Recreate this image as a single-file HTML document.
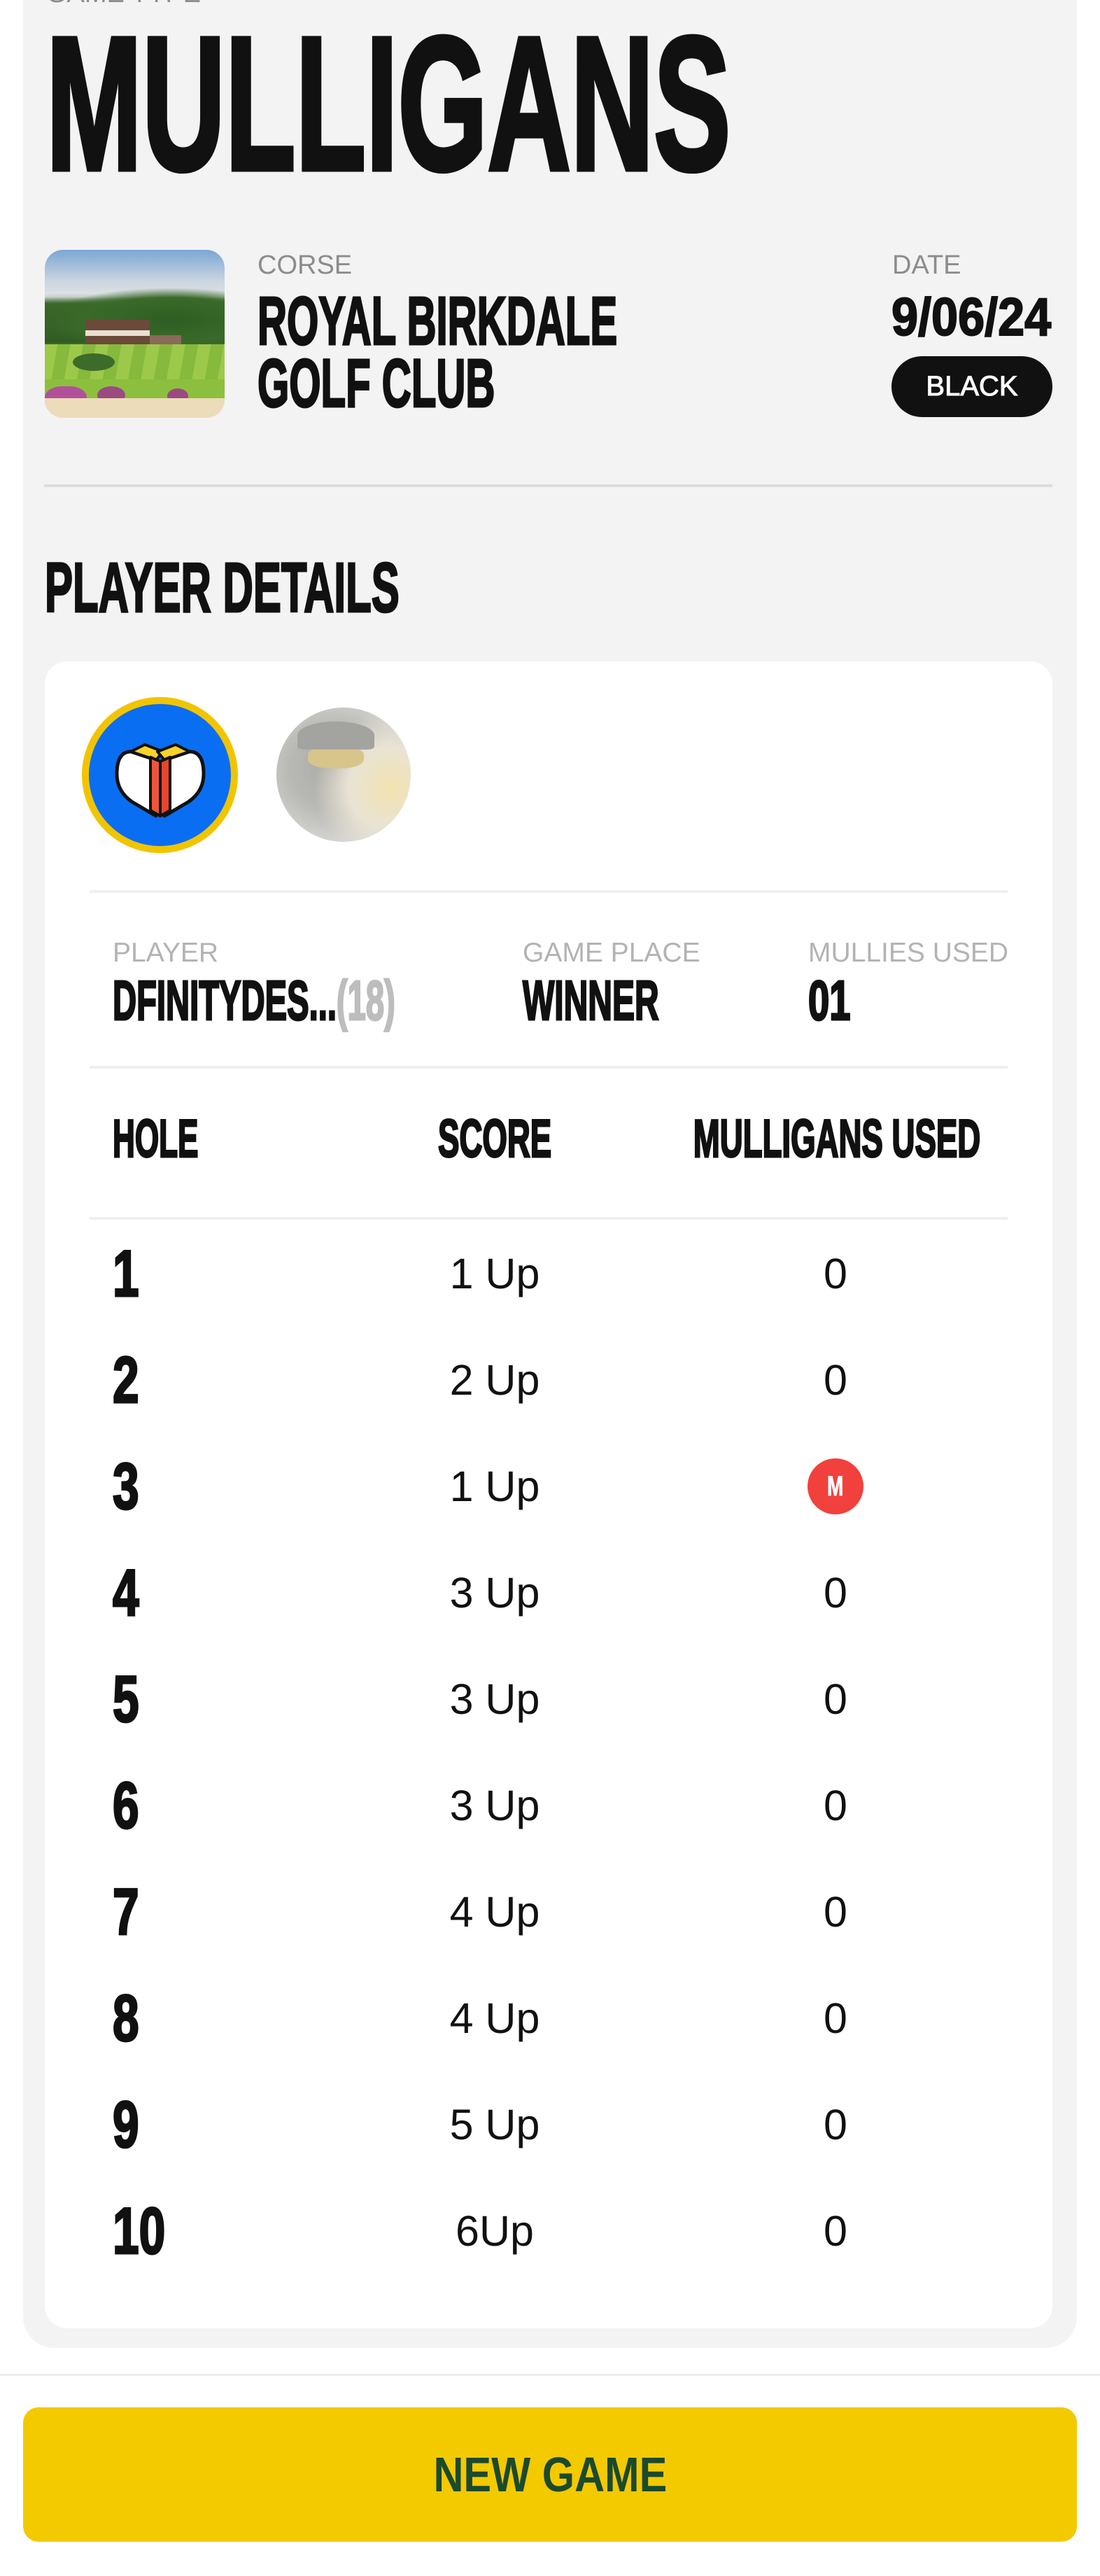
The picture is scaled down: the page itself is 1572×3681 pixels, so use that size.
<!DOCTYPE html>
<html><head><meta charset="utf-8">
<style>
*{margin:0;padding:0;box-sizing:border-box}
html,body{width:1572px;height:3681px;background:#fff;overflow:hidden;font-family:"Liberation Sans",sans-serif;color:#111}
.abs{position:absolute;white-space:nowrap}
.c{display:inline-block;font-weight:bold;transform:scaleX(0.6);transform-origin:left top;white-space:nowrap;-webkit-text-stroke:2px #111}
.cc{transform-origin:center top}
.lbl{font-size:38px;color:#8c8c8c}
.lbl2{font-size:39px;color:#b3b3b3}
.panel{position:absolute;left:33px;top:-40px;width:1506px;height:3395px;background:#f3f3f3;border-radius:0 0 44px 44px}
.card{position:absolute;left:64px;top:945px;width:1440px;height:2382px;background:#fff;border-radius:32px}
.hr{position:absolute;height:4px;background:#efefef}
.row{position:absolute;left:0;width:1572px;height:100px}
.num{position:absolute;left:161px;font-size:94px;line-height:100px}
.num .c{transform:scaleX(0.72);-webkit-text-stroke:3px #111}
.sc{position:absolute;left:557px;width:300px;text-align:center;font-size:61px;line-height:100px}
.mu{position:absolute;left:1094px;width:200px;text-align:center;font-size:61px;line-height:100px}
</style></head><body>
<div class="panel"></div>

<div class="abs lbl" style="left:66px;top:-30px;">GAME TYPE</div>
<div class="abs" style="left:66px;top:12px;"><span class="c" style="font-size:272px;line-height:272px;transform:scaleX(0.605);-webkit-text-stroke:7px #111">MULLIGANS</span></div>

<!-- golf image -->
<div class="abs" style="left:64px;top:357px;width:257px;height:240px;border-radius:26px;overflow:hidden;background:linear-gradient(#7aa6d6 0%,#c9d4de 18%,#dfe3e6 28%,#3f6b2a 32%,#2f5a22 55%,#8bbb3c 60%,#9cc446 75%,#e6d3ad 85%,#efe1c2 100%)">
  <div style="position:absolute;left:0;top:55px;width:257px;height:90px;background:radial-gradient(ellipse at 70% 50%,#2f5e24 0,#3a6a2a 50%,transparent 72%),radial-gradient(ellipse at 15% 50%,#356227 0,transparent 60%)"></div>
  <div style="position:absolute;left:58px;top:100px;width:92px;height:40px;background:#6b4a3a"></div>
  <div style="position:absolute;left:58px;top:115px;width:92px;height:8px;background:#e8e0d0"></div>
  <div style="position:absolute;left:150px;top:122px;width:45px;height:18px;background:#8a6a58"></div>
  <div style="position:absolute;left:0;top:135px;width:257px;height:50px;background:repeating-linear-gradient(100deg,#9cc94a 0 18px,#86b93c 18px 36px)"></div>
  <div style="position:absolute;left:40px;top:148px;width:60px;height:25px;border-radius:50%;background:#3d6b2a"></div>
  <div style="position:absolute;left:0;top:185px;width:257px;height:30px;background:#8dbf3e"></div>
  <div style="position:absolute;left:0;top:195px;width:60px;height:40px;border-radius:40%;background:#b0509a"></div>
  <div style="position:absolute;left:75px;top:195px;width:40px;height:25px;border-radius:50%;background:#9a4a7f"></div>
  <div style="position:absolute;left:175px;top:198px;width:30px;height:22px;border-radius:50%;background:#9a4a7f"></div>
  <div style="position:absolute;left:0;top:212px;width:257px;height:28px;background:#ecdcba"></div>
</div>

<div class="abs lbl" style="left:368px;top:358px;">CORSE</div>
<div class="abs" style="left:368px;top:414px;"><span class="c" style="font-size:97px;line-height:89px;transform:scaleX(0.6);-webkit-text-stroke:3px #111">ROYAL BIRKDALE<br>GOLF CLUB</span></div>

<div class="abs lbl" style="left:1275px;top:358px;">DATE</div>
<div class="abs" style="left:1274px;top:414px;"><span class="c" style="font-size:76px;line-height:80px;transform:scaleX(0.9)">9/06/24</span></div>
<div class="abs" style="left:1274px;top:509px;width:230px;height:87px;border-radius:44px;background:#111;color:#fff;font-size:40px;line-height:87px;text-align:center;-webkit-text-stroke:1px #fff">BLACK</div>

<div class="hr" style="left:63px;top:692px;width:1441px;background:#dcdcdc"></div>

<div class="abs" style="left:64px;top:790px;"><span class="c" style="font-size:100px;line-height:100px;transform:scaleX(0.6);-webkit-text-stroke:3px #111">PLAYER DETAILS</span></div>

<div class="card"></div>

<!-- avatar 1 -->
<div class="abs" style="left:117px;top:996px;width:223px;height:223px;border-radius:50%;background:#0a6ef3;border:10px solid #f1c400">
<svg width="203" height="203" viewBox="0 0 203 203" style="position:absolute;left:0;top:0">
<path d="M96 80 L60 68 Q40 68 40 100 Q40 125 62 140 L96 160 Z" fill="#fff" stroke="#111" stroke-width="5" stroke-linejoin="round"/>
<path d="M108 80 L144 68 Q164 68 164 100 Q164 125 142 140 L108 160 Z" fill="#fff" stroke="#111" stroke-width="5" stroke-linejoin="round"/>
<path d="M60 68 L80 58 L106 68 L96 80 Z" fill="#f7d22a" stroke="#111" stroke-width="4" stroke-linejoin="round"/>
<path d="M108 80 L98 68 L124 58 L144 68 Z" fill="#f7d22a" stroke="#111" stroke-width="4" stroke-linejoin="round"/>
<path d="M88 76 L102 82 L102 160 L88 152 Z" fill="#f0553a" stroke="#111" stroke-width="4" stroke-linejoin="round"/>
<path d="M102 82 L116 76 L116 152 L102 160 Z" fill="#e8452f" stroke="#111" stroke-width="4" stroke-linejoin="round"/>
</svg></div>
<!-- avatar 2 -->
<div class="abs" style="left:395px;top:1011px;width:192px;height:192px;border-radius:50%;overflow:hidden;background:radial-gradient(circle at 85% 60%,#f3e3b0 0,#e8e3d4 30%,transparent 55%),radial-gradient(ellipse at 42% 45%,#a9a9a6 0,#b8b8b4 40%,#d3d3d0 70%,#e3e3e0 100%)">
  <div style="position:absolute;left:45px;top:55px;width:80px;height:32px;border-radius:40%;background:#d7c58c"></div>
  <div style="position:absolute;left:30px;top:20px;width:110px;height:40px;border-radius:50% 50% 10% 10%;background:#a3a3a0"></div>
</div>

<div class="hr" style="left:128px;top:1272px;width:1312px"></div>

<div class="abs lbl2" style="left:161px;top:1340px;">PLAYER</div>
<div class="abs lbl2" style="left:747px;top:1340px;">GAME PLACE</div>
<div class="abs lbl2" style="left:1155px;top:1340px;">MULLIES USED</div>
<div class="abs" style="left:161px;top:1390px;"><span class="c" style="font-size:80px;line-height:80px;transform:scaleX(0.59);-webkit-text-stroke:3px #111">DFINITYDES...<span style="color:#bdbdbd;-webkit-text-stroke:3px #bdbdbd">(18)</span></span></div>
<div class="abs" style="left:747px;top:1390px;"><span class="c" style="font-size:80px;line-height:80px;transform:scaleX(0.6);-webkit-text-stroke:3px #111">WINNER</span></div>
<div class="abs" style="left:1155px;top:1390px;"><span class="c" style="font-size:80px;line-height:80px;transform:scaleX(0.68);-webkit-text-stroke:3px #111">01</span></div>

<div class="hr" style="left:128px;top:1523px;width:1312px"></div>

<div class="abs" style="left:161px;top:1590px;"><span class="c" style="font-size:76px;line-height:76px;transform:scaleX(0.58);-webkit-text-stroke:3px #111">HOLE</span></div>
<div class="abs" style="left:407px;top:1590px;width:600px;text-align:center"><span class="c cc" style="font-size:76px;line-height:76px;transform:scaleX(0.6);-webkit-text-stroke:3px #111">SCORE</span></div>
<div class="abs" style="left:596px;top:1590px;width:1200px;text-align:center"><span class="c cc" style="font-size:76px;line-height:76px;transform:scaleX(0.6);-webkit-text-stroke:3px #111">MULLIGANS USED</span></div>

<div class="hr" style="left:128px;top:1739px;width:1312px"></div>

<div class="row" style="top:1770px"><div class="num"><span class="c">1</span></div><div class="sc">1 Up</div><div class="mu">0</div></div>
<div class="row" style="top:1922px"><div class="num"><span class="c">2</span></div><div class="sc">2 Up</div><div class="mu">0</div></div>
<div class="row" style="top:2074px"><div class="num"><span class="c">3</span></div><div class="sc">1 Up</div><div class="mu"><div style="position:absolute;left:60px;top:10px;width:80px;height:80px;border-radius:50%;background:#f2403c;color:#fff;text-align:center;line-height:80px;font-size:40px"><span class="c cc" style="transform:scaleX(0.7);-webkit-text-stroke:1px #fff">M</span></div></div></div>
<div class="row" style="top:2226px"><div class="num"><span class="c">4</span></div><div class="sc">3 Up</div><div class="mu">0</div></div>
<div class="row" style="top:2378px"><div class="num"><span class="c">5</span></div><div class="sc">3 Up</div><div class="mu">0</div></div>
<div class="row" style="top:2530px"><div class="num"><span class="c">6</span></div><div class="sc">3 Up</div><div class="mu">0</div></div>
<div class="row" style="top:2682px"><div class="num"><span class="c">7</span></div><div class="sc">4 Up</div><div class="mu">0</div></div>
<div class="row" style="top:2834px"><div class="num"><span class="c">8</span></div><div class="sc">4 Up</div><div class="mu">0</div></div>
<div class="row" style="top:2986px"><div class="num"><span class="c">9</span></div><div class="sc">5 Up</div><div class="mu">0</div></div>
<div class="row" style="top:3138px"><div class="num"><span class="c">10</span></div><div class="sc">6Up</div><div class="mu">0</div></div>

<div class="hr" style="left:0;top:3392px;width:1572px;height:3px;background:#ececec"></div>

<div class="abs" style="left:33px;top:3440px;width:1506px;height:192px;border-radius:22px;background:#f3c900;color:#1b4a2c;text-align:center;line-height:192px;font-size:70px;font-weight:bold"><span style="display:inline-block;transform:scaleX(0.85)">NEW GAME</span></div>
</body></html>
